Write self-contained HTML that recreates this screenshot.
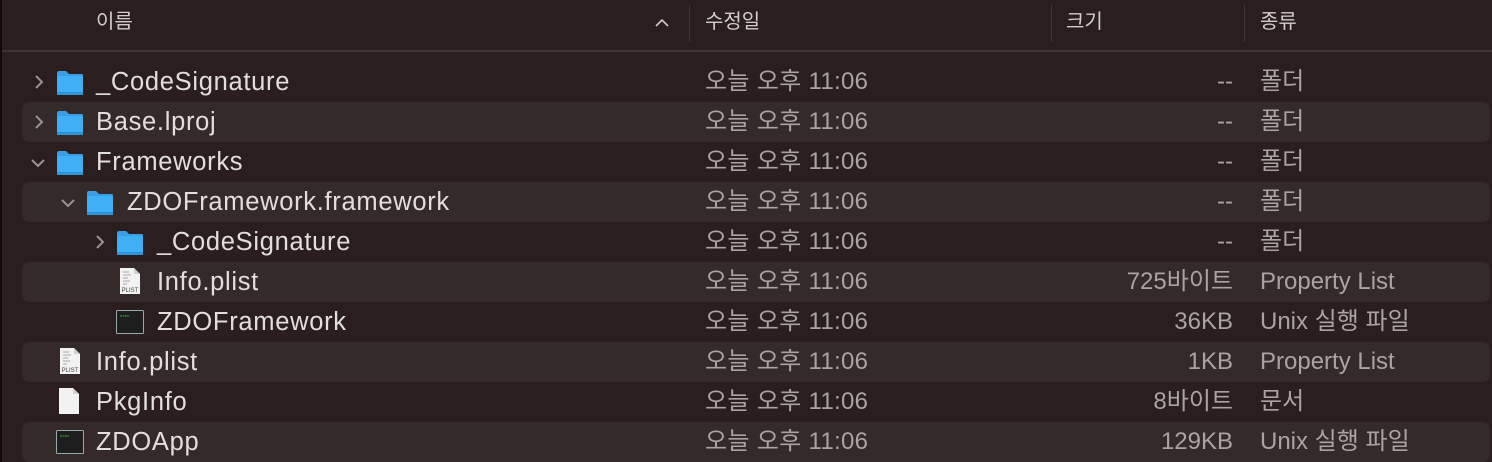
<!DOCTYPE html><html><head><meta charset="utf-8"><style>
body{margin:0;width:1492px;height:462px;background:#2a1f1e;overflow:hidden;position:relative;font-family:"Liberation Sans","Noto Sans CJK KR",sans-serif;}
.a{position:absolute}
.h{color:#d2cdcc;font-size:20px;top:9px;line-height:26px}
.dv{position:absolute;top:5px;width:1px;height:37px;background:#3f3635}
.row{position:absolute;left:0;width:1492px;height:40px}
.st{position:absolute;left:22px;right:2px;top:0;bottom:0;background:#342a29;border-radius:7px}
.nm,.dt,.sz,.kd{position:absolute;top:6px;line-height:28px;height:28px;white-space:nowrap}
.nm{font-size:25.5px;letter-spacing:0.7px;color:#e2dedd}
.dt{left:705px;font-size:24px;letter-spacing:0.3px;color:#aaa3a2}
.sz{right:259px;font-size:24px;color:#aaa3a2}
.kd{left:1260px;font-size:24px;color:#aaa3a2}
.chev{position:absolute;top:12px}
.ic{position:absolute;top:7px}
</style></head><body>
<div class="a" style="left:0;top:0;width:2px;height:462px;background:#0e0a0a"></div>
<div class="a h" style="left:96px">이름</div>
<svg class="a" style="left:654px;top:16px" width="16" height="12"><path d="M2 10 L8 4 L14 10" stroke="#cfcac9" stroke-width="1.6" fill="none"/></svg>
<div class="dv" style="left:689px"></div>
<div class="a h" style="left:705px">수정일</div>
<div class="dv" style="left:1051px"></div>
<div class="a h" style="left:1066px">크기</div>
<div class="dv" style="left:1244px"></div>
<div class="a h" style="left:1260px">종류</div>
<div class="a" style="left:2px;top:50px;width:1490px;height:2px;background:#3d3433"></div>

<svg width="0" height="0" style="position:absolute"><defs>
<symbol id="fold" viewBox="0 0 28 26"><path d="M1 3 Q1 1 3 1 H10 L13 4 H26 Q27 4 27 6 V7 H1Z" fill="#3a9ee6"/><rect x="1" y="6" width="26" height="19" rx="2" fill="#3fb0f5"/><rect x="1" y="22" width="26" height="3" fill="#2f93d8"/></symbol>
<symbol id="plist" viewBox="0 0 22 28"><path d="M1 1 H15 L21 7 V27 H1Z" fill="#f2f2f2"/><path d="M15 1 V7 H21" fill="#d0d0d0"/><g stroke="#aaa" stroke-width="1"><line x1="4" y1="5" x2="10" y2="5"/><line x1="4" y1="8" x2="12" y2="8"/><line x1="4" y1="11" x2="9" y2="11"/><line x1="4" y1="14" x2="11" y2="14"/><line x1="4" y1="17" x2="8" y2="17"/></g><text x="11" y="25" font-size="6" text-anchor="middle" fill="#444" font-family="Liberation Sans">PLIST</text></symbol>
<symbol id="doc" viewBox="0 0 22 28"><path d="M1 1 H15 L21 7 V27 H1Z" fill="#f2f2f2"/><path d="M15 1 V7 H21" fill="#d0d0d0"/></symbol>
<symbol id="exe" viewBox="0 0 28 24"><rect x="0.5" y="0.5" width="27" height="23" rx="1" fill="#1e1e1e" stroke="#9aa"/><text x="4" y="7" font-size="4" fill="#3c3" font-family="Liberation Mono">exec</text></symbol>
<symbol id="cr" viewBox="0 0 10 16"><path d="M2 2 L8 8 L2 14" stroke="#9a9392" stroke-width="2" fill="none"/></symbol>
<symbol id="cd" viewBox="0 0 16 10"><path d="M2 2 L8 8 L14 2" stroke="#9a9392" stroke-width="2" fill="none"/></symbol>
</defs></svg>

<div class="row" style="top:62px"><svg class="chev" style="left:34px" width="10" height="16"><use href="#cr"/></svg><svg class="ic" style="left:56px;top:8px" width="28" height="26"><use href="#fold"/></svg><div class="nm" style="left:96px">_CodeSignature</div><div class="dt">오늘 오후 11:06</div><div class="sz">--</div><div class="kd">폴더</div></div>
<div class="row" style="top:102px"><div class="st"></div><svg class="chev" style="left:34px" width="10" height="16"><use href="#cr"/></svg><svg class="ic" style="left:56px;top:8px" width="28" height="26"><use href="#fold"/></svg><div class="nm" style="left:96px">Base.lproj</div><div class="dt">오늘 오후 11:06</div><div class="sz">--</div><div class="kd">폴더</div></div>
<div class="row" style="top:142px"><svg class="chev" style="left:30px;top:16px" width="16" height="10"><use href="#cd"/></svg><svg class="ic" style="left:56px;top:8px" width="28" height="26"><use href="#fold"/></svg><div class="nm" style="left:96px">Frameworks</div><div class="dt">오늘 오후 11:06</div><div class="sz">--</div><div class="kd">폴더</div></div>
<div class="row" style="top:182px"><div class="st"></div><svg class="chev" style="left:60px;top:16px" width="16" height="10"><use href="#cd"/></svg><svg class="ic" style="left:86px;top:8px" width="28" height="26"><use href="#fold"/></svg><div class="nm" style="left:127px">ZDOFramework.framework</div><div class="dt">오늘 오후 11:06</div><div class="sz">--</div><div class="kd">폴더</div></div>
<div class="row" style="top:222px"><svg class="chev" style="left:95px" width="10" height="16"><use href="#cr"/></svg><svg class="ic" style="left:116px;top:8px" width="28" height="26"><use href="#fold"/></svg><div class="nm" style="left:157px">_CodeSignature</div><div class="dt">오늘 오후 11:06</div><div class="sz">--</div><div class="kd">폴더</div></div>
<div class="row" style="top:262px"><div class="st"></div><svg class="ic" style="left:119px;top:5px" width="22" height="28"><use href="#plist"/></svg><div class="nm" style="left:157px">Info.plist</div><div class="dt">오늘 오후 11:06</div><div class="sz">725바이트</div><div class="kd">Property List</div></div>
<div class="row" style="top:302px"><svg class="ic" style="left:116px;top:8px" width="28" height="24"><use href="#exe"/></svg><div class="nm" style="left:157px">ZDOFramework</div><div class="dt">오늘 오후 11:06</div><div class="sz">36KB</div><div class="kd">Unix 실행 파일</div></div>
<div class="row" style="top:342px"><div class="st"></div><svg class="ic" style="left:59px;top:5px" width="22" height="28"><use href="#plist"/></svg><div class="nm" style="left:96px">Info.plist</div><div class="dt">오늘 오후 11:06</div><div class="sz">1KB</div><div class="kd">Property List</div></div>
<div class="row" style="top:382px"><svg class="ic" style="left:58px;top:5px" width="22" height="28"><use href="#doc"/></svg><div class="nm" style="left:96px">PkgInfo</div><div class="dt">오늘 오후 11:06</div><div class="sz">8바이트</div><div class="kd">문서</div></div>
<div class="row" style="top:422px"><div class="st"></div><svg class="ic" style="left:56px;top:8px" width="28" height="24"><use href="#exe"/></svg><div class="nm" style="left:96px">ZDOApp</div><div class="dt">오늘 오후 11:06</div><div class="sz">129KB</div><div class="kd">Unix 실행 파일</div></div>
</body></html>
